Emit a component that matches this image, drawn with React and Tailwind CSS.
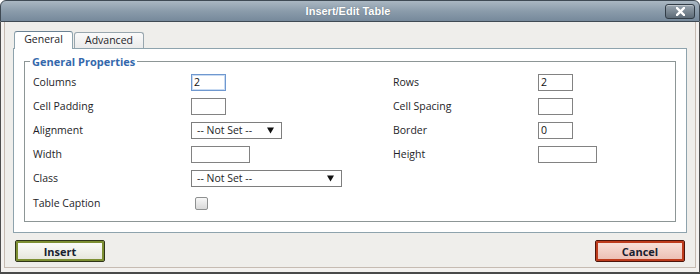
export default function App() {
  const Box = ({ w, val, focus }) => (
    <div
      className={
        "h-[17px] bg-white border flex items-center pl-[2px] text-[10.5px] leading-none text-[#111] " +
        (focus ? "border-[#6f98cf] shadow-[inset_0_0_0_1px_#c9dbf2]" : "border-[#828282]")
      }
      style={{ width: w }}
    >
      {val}
    </div>
  );
  const Sel = ({ w }) => (
    <div
      className="h-[17px] bg-white border border-[#7e7e7e] flex items-center justify-between pl-[5px] pr-[7px] text-[10.5px] leading-none text-[#1e1e28]"
      style={{ width: w }}
    >
      <span>-- Not Set --</span>
      <svg width="7" height="7" viewBox="0 0 7 7">
        <polygon points="0,0.5 7,0.5 3.5,6.5" fill="#111" />
      </svg>
    </div>
  );
  const Label = ({ children }) => (
    <div className="pl-[8px] text-[10.5px] leading-none text-[#1e1e28]">{children}</div>
  );
  const Right = ({ children }) => (
    <div className="text-[10.5px] leading-none text-[#1e1e28]">{children}</div>
  );

  return (
    <div className="w-[700px] h-[274px] flex flex-col font-['Open_Sans',sans-serif]">
      {/* title bar */}
      <div className="h-[22px] shrink-0 rounded-t-[6px] border border-[#3f4a54] bg-gradient-to-b from-[#aab7c2] via-[#8b9cab] to-[#76899b] grid grid-cols-[1fr_auto_1fr] items-center pr-[4px]">
        <div />
        <div className="font-['Liberation_Sans',sans-serif] font-bold text-[11px] text-white [text-shadow:0_0_1px_rgba(40,50,60,0.5)]">
          Insert/Edit Table
        </div>
        <div className="flex justify-end">
          <div className="w-[30px] h-[15px] rounded-[3px] border border-[#323d47] bg-gradient-to-b from-[#9aa6b0] to-[#5d6b77] shadow-[inset_0_1px_0_rgba(255,255,255,0.35)] flex items-center justify-center">
            <svg width="9" height="9" viewBox="0 0 9 9">
              <path d="M1 1 L8 8 M8 1 L1 8" stroke="#fff" strokeWidth="2.4" strokeLinecap="square" />
            </svg>
          </div>
        </div>
      </div>

      {/* frame */}
      <div className="flex-1 flex flex-col border-x border-x-[#4d4d4d] border-b-2 border-b-[#4a4a4a] bg-[#f3f1ef] px-[3px] pb-[4px]">
        <div className="flex-1 flex flex-col border-x border-b border-[#c6bbb2] bg-[#efeeeb] pl-[8px] pr-[8px] pt-[9px] pb-[5px]">
          {/* tabs */}
          <div className="h-[17px] flex items-end gap-[1px] pl-[1px]">
            <div className="relative z-10 -mb-[1px] w-[59px] h-[18px] rounded-t-[3px] border border-b-0 border-[#8ea3ad] border-t-[#6c8394] bg-white flex items-center justify-center pb-[2px] text-[10.5px] leading-none text-[#1e1e28]">
              General
            </div>
            <div className="w-[70px] h-[16px] rounded-t-[3px] border border-b-0 border-[#98a6ae] bg-gradient-to-b from-[#fafafa] to-[#ebebeb] flex items-center justify-center text-[10.5px] leading-none text-[#1e1e28]">
              Advanced
            </div>
          </div>

          {/* panel */}
          <div className="h-[185px] border border-[#8ea3ad] bg-white px-[10px] pt-[6px]">
            <fieldset className="border border-[#8d9696] pb-[5px]">
              <legend className="ml-[5px] px-[2px] text-[11px] leading-[13px] font-bold text-[#3468ac]">
                General Properties
              </legend>
              <div className="pt-[2px] grid grid-cols-[166px_202px_145px_1fr] grid-rows-[24px_24px_24px_24px_24px_26px] items-center">
                <Label>Columns</Label>
                <div><Box w={35} val="2" focus /></div>
                <Right>Rows</Right>
                <div><Box w={35} val="2" /></div>

                <Label>Cell Padding</Label>
                <div><Box w={35} /></div>
                <Right>Cell Spacing</Right>
                <div><Box w={35} /></div>

                <Label>Alignment</Label>
                <div><Sel w={91} /></div>
                <Right>Border</Right>
                <div><Box w={35} val="0" /></div>

                <Label>Width</Label>
                <div><Box w={59} /></div>
                <Right>Height</Right>
                <div><Box w={59} /></div>

                <Label>Class</Label>
                <div className="col-span-3"><Sel w={151} /></div>

                <Label>Table Caption</Label>
                <div className="col-span-3 pl-[4px]">
                  <div className="w-[13px] h-[13px] rounded-[2px] border border-[#8e9090] bg-gradient-to-b from-[#f7f7f7] to-[#d9d9d9]" />
                </div>
              </div>
            </fieldset>
          </div>

          {/* buttons */}
          <div className="mt-[7px] flex justify-between px-[2px]">
            <div className="w-[90px] h-[22px] rounded-[2px] border border-[#2f3518] shadow-[inset_0_0_0_2px_#7d8f33] bg-gradient-to-b from-[#fefefc] to-[#e4e4da] flex items-center justify-center text-[11px] font-bold text-[#18202f] leading-none">
              Insert
            </div>
            <div className="w-[90px] h-[22px] rounded-[2px] border border-[#4e140a] shadow-[inset_0_0_0_2px_#bd3b1c] bg-gradient-to-b from-[#f9e3dc] to-[#ebbcb1] flex items-center justify-center text-[11px] font-bold text-[#18202f] leading-none">
              Cancel
            </div>
          </div>
        </div>
      </div>
    </div>
  );
}
